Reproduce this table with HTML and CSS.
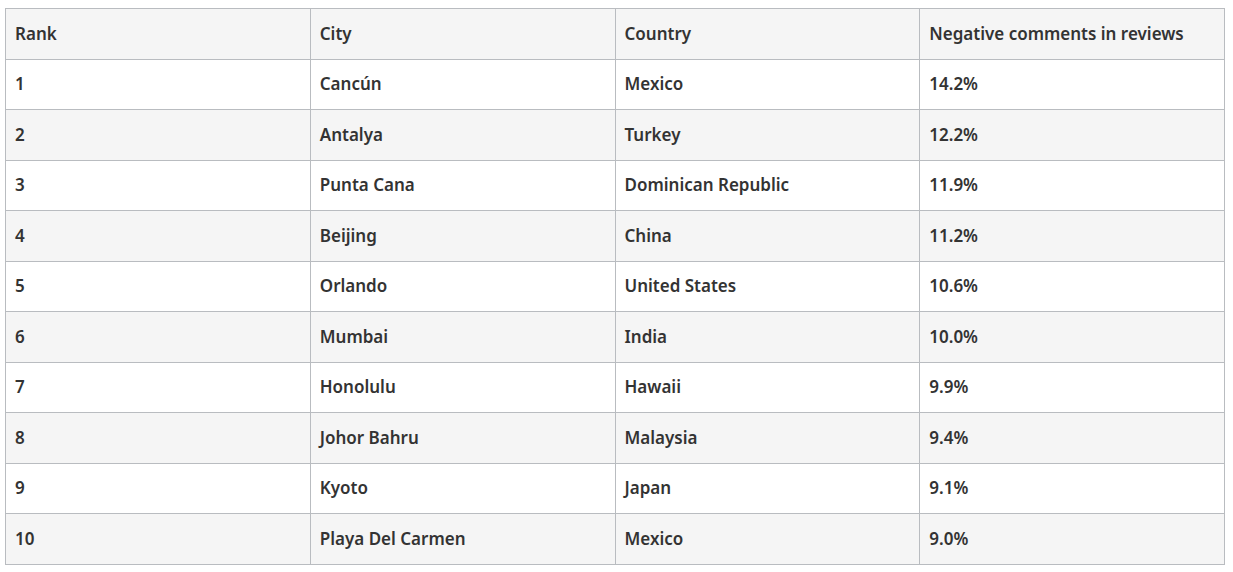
FILE: index.html
```html
<!DOCTYPE html>
<html>
<head>
<meta charset="utf-8">
<link rel="stylesheet" href="styles.css">
</head>
<body>
<table class="ranking">
  <thead>
    <tr><th>Rank</th><th>City</th><th>Country</th><th>Negative comments in reviews</th></tr>
  </thead>
  <tbody>
    <tr><td>1</td><td>Cancún</td><td>Mexico</td><td>14.2%</td></tr>
    <tr><td>2</td><td>Antalya</td><td>Turkey</td><td>12.2%</td></tr>
    <tr><td>3</td><td>Punta Cana</td><td>Dominican Republic</td><td>11.9%</td></tr>
    <tr><td>4</td><td>Beijing</td><td>China</td><td>11.2%</td></tr>
    <tr><td>5</td><td>Orlando</td><td>United States</td><td>10.6%</td></tr>
    <tr><td>6</td><td>Mumbai</td><td>India</td><td>10.0%</td></tr>
    <tr><td>7</td><td>Honolulu</td><td>Hawaii</td><td>9.9%</td></tr>
    <tr><td>8</td><td>Johor Bahru</td><td>Malaysia</td><td>9.4%</td></tr>
    <tr><td>9</td><td>Kyoto</td><td>Japan</td><td>9.1%</td></tr>
    <tr><td>10</td><td>Playa Del Carmen</td><td>Mexico</td><td>9.0%</td></tr>
  </tbody>
</table>
</body>
</html>
```
FILE: styles.css
```css
html, body {
  margin: 0;
  padding: 0;
  background: #ffffff;
}
body {
  padding: 8px 0 0 5px;
  font-family: "Noto Sans", Lato, sans-serif;
  color: #333333;
}
.ranking {
  border-collapse: collapse;
  width: 1220px;
  table-layout: fixed;
}
.ranking th,
.ranking td {
  border: 1px solid #b9bcc0;
  height: 50.5px;
  box-sizing: border-box;
  padding: 0 9px;
  text-align: left;
  vertical-align: middle;
  font-size: 17px;
  font-weight: 600;
  line-height: 1.2;
}
.ranking thead tr {
  background: #f5f5f5;
}
.ranking tbody tr:nth-child(even) {
  background: #f5f5f5;
}
```
